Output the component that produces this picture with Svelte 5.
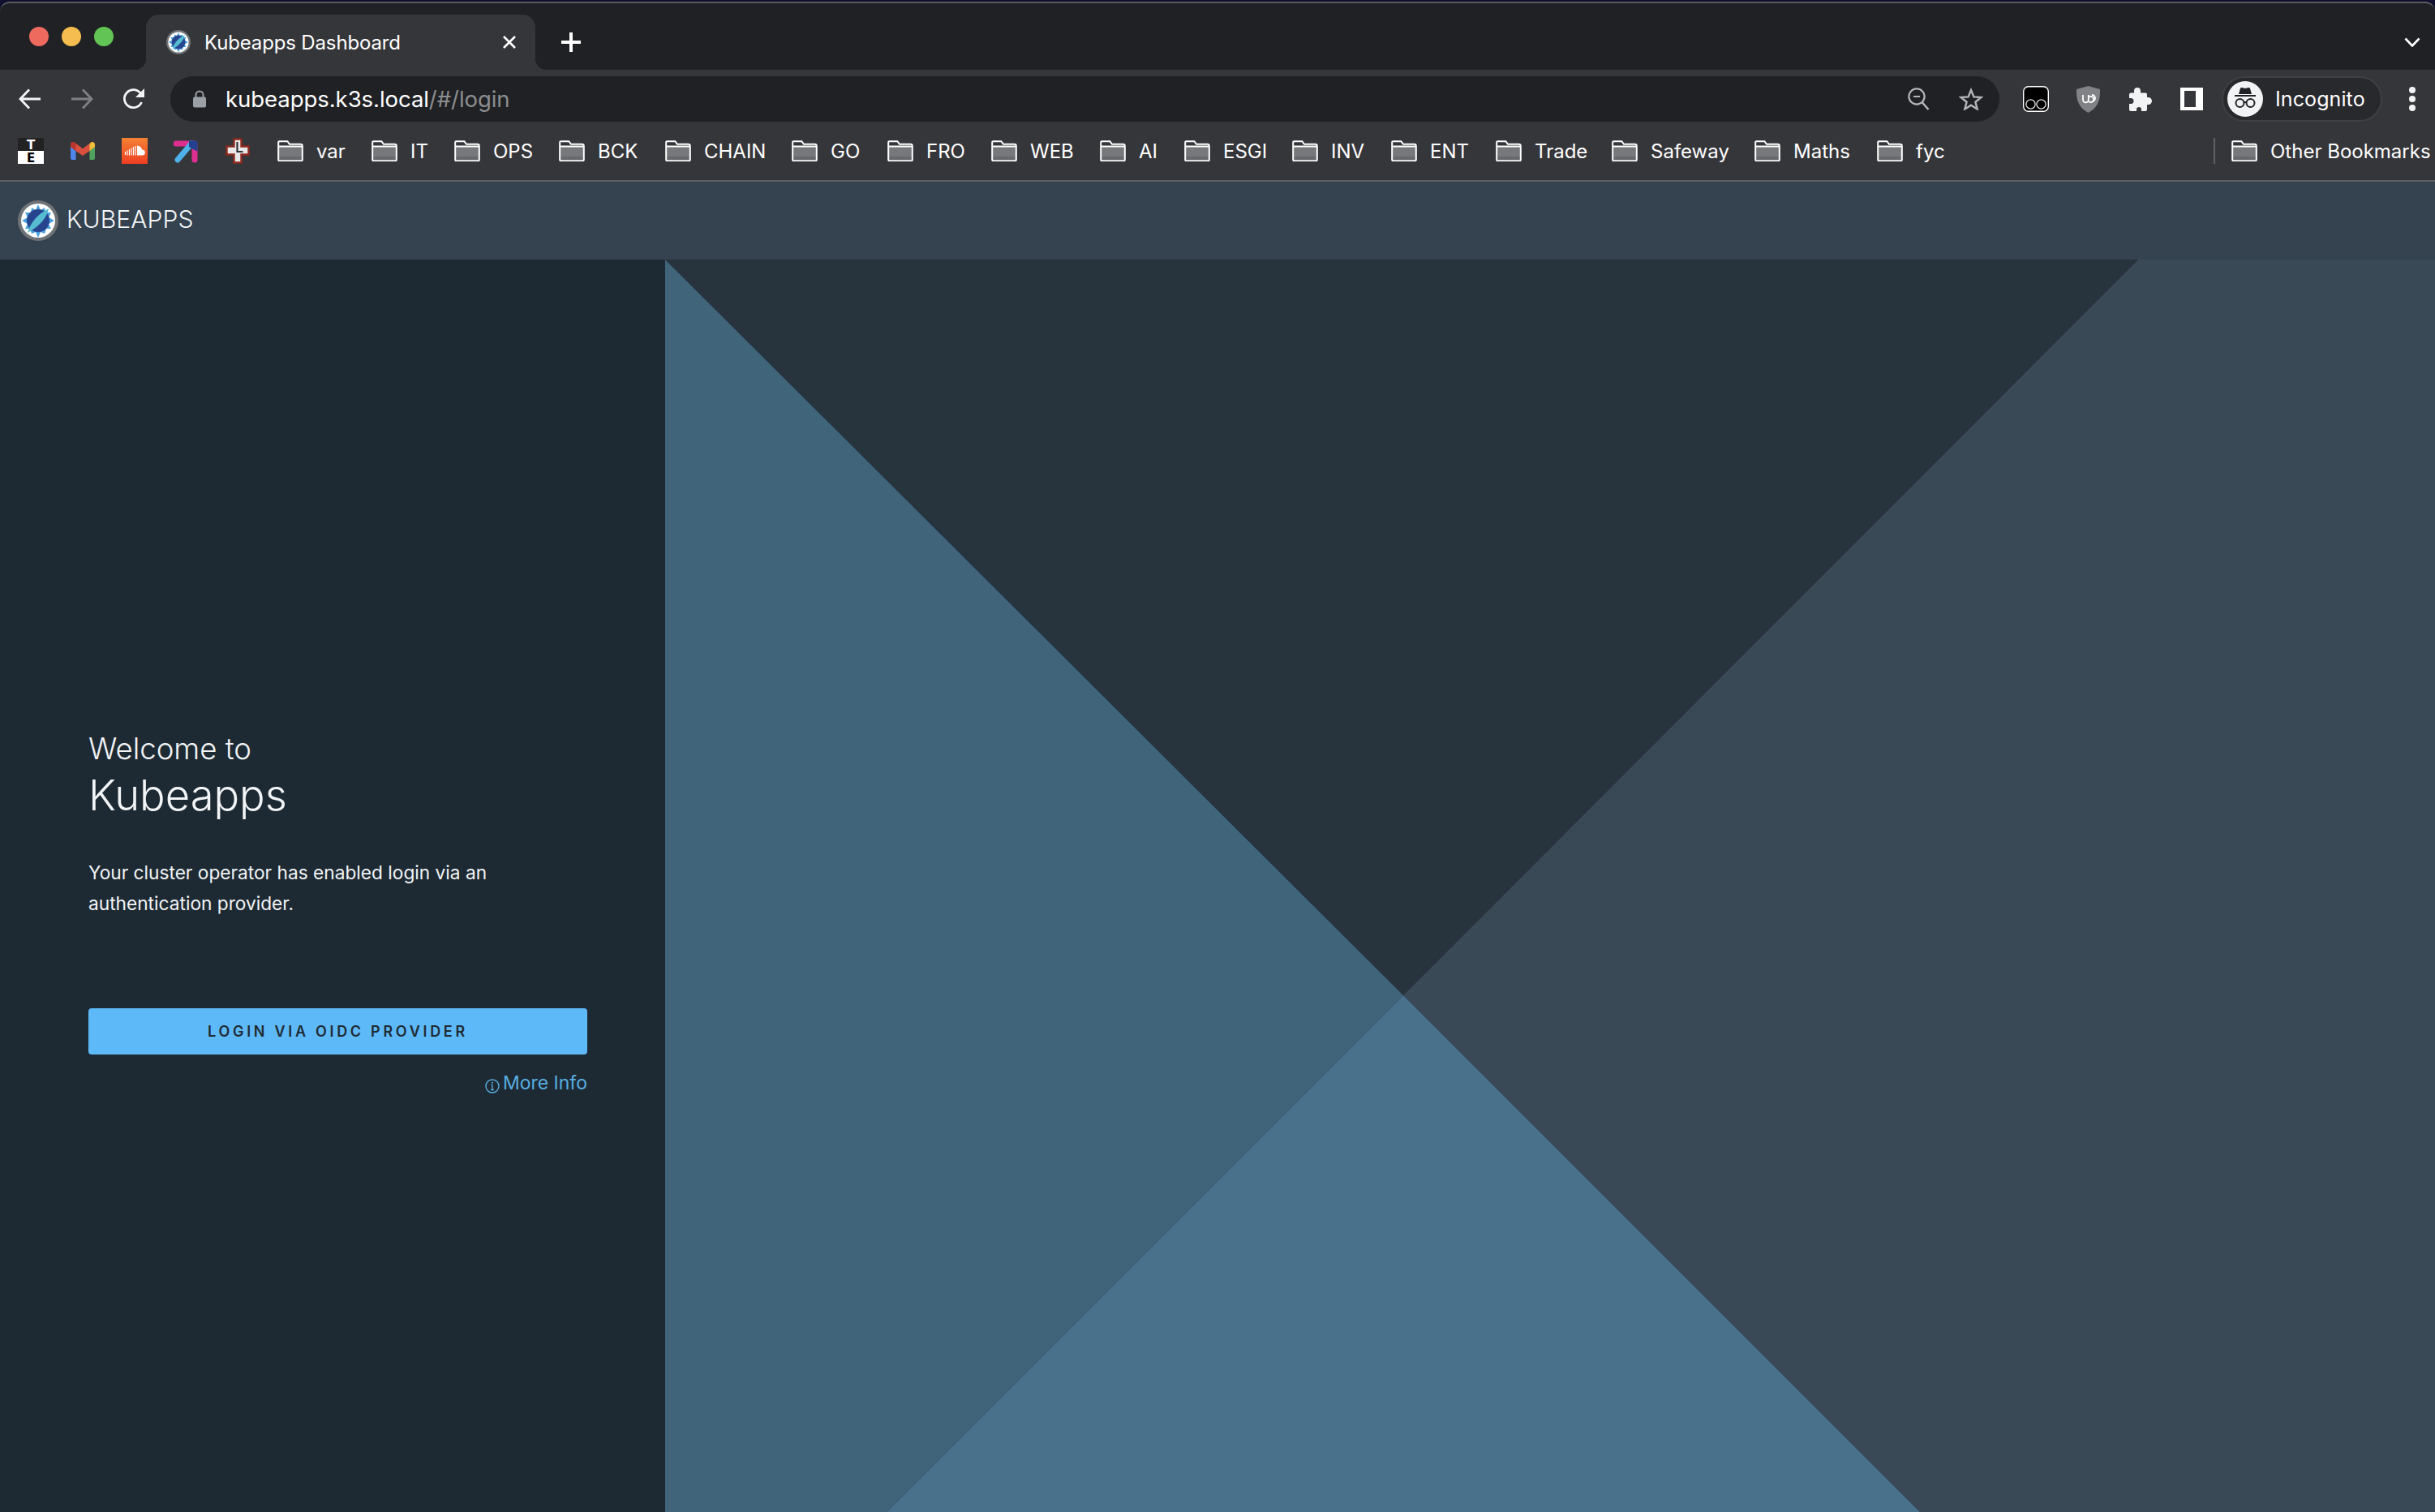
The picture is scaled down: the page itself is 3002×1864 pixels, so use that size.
<script>
  const bookmarks = [
    { name: 'var', w: 116 }, { name: 'IT', w: 102 }, { name: 'OPS', w: 129 }, { name: 'BCK', w: 131 },
    { name: 'CHAIN', w: 156 }, { name: 'GO', w: 118 }, { name: 'FRO', w: 128 }, { name: 'WEB', w: 134 },
    { name: 'AI', w: 104 }, { name: 'ESGI', w: 133 }, { name: 'INV', w: 122 }, { name: 'ENT', w: 129 },
    { name: 'Trade', w: 143 }, { name: 'Safeway', w: 176 }, { name: 'Maths', w: 151 }, { name: 'fyc', w: 100 }
  ];
</script>

{#snippet logo(size)}
  <svg width={size} height={size} viewBox="0 0 50 50" aria-hidden="true">
    <circle cx="25" cy="25" r="25" fill="#6f7377" />
    <circle cx="25" cy="25" r="21" fill="#fff" />
    <path d="M25 5l3 7 5-3 1 6 7 0-3 6 7 4-7 4 3 6-6 0-2 6-5-2-3 7-3-7-5 2-2-6-6 0 3-6-7-4 7-4-3-6 7 0 1-6 5 3z" fill="#4a9fdc" />
    <circle cx="25" cy="25" r="14" fill="#27458f" />
    <path d="M38 10C36 19 31 29 12 40C15 30 21 19 38 10z" fill="#55bcd2" />
  </svg>
{/snippet}

{#snippet folder()}
  <svg class="folder" width="32" height="26" viewBox="0 0 32 26" aria-hidden="true">
    <path d="M2 8h28v16H2z" fill="#77787b" />
    <path d="M2 20h28v4H2z" fill="#68696c" />
    <path d="M1.2 24V2.4q0-1.2 1.2-1.2h10l2.6 3.6h13.6q2.2 0 2.2 2.2v17q0 1.2-1.2 1.2H2.4q-1.2 0-1.2-1.2zM1.2 7.6h29.6" fill="none" stroke="#fff" stroke-width="2" />
  </svg>
{/snippet}

<div class="page">
  <div class="edge"></div>
  <div class="chrome">
    <div class="tabstrip">
      <div class="lights">
        <span class="light red"></span><span class="light yellow"></span><span class="light green"></span>
      </div>
      <div class="tab">
        <span class="favicon">{@render logo(30)}</span>
        <span class="tab-title">Kubeapps Dashboard</span>
        <svg class="tab-close" width="16" height="16" viewBox="0 0 16 16" aria-hidden="true">
          <path d="M1 1l14 14M15 1L1 15" stroke="#fff" stroke-width="2.6" />
        </svg>
      </div>
      <svg class="plus" width="24" height="24" viewBox="0 0 24 24" aria-hidden="true">
        <path d="M12 0v24M0 12h24" stroke="#fff" stroke-width="4" />
      </svg>
      <svg class="chevron" width="20" height="12" viewBox="0 0 20 12" aria-hidden="true">
        <path d="M1.5 1.5L10 10.5l8.5-9" fill="none" stroke="#fff" stroke-width="2.6" />
      </svg>
    </div>

    <div class="toolbar">
      <span class="nav">
        <svg width="28" height="26" viewBox="0 0 28 26" aria-hidden="true"><path d="M27 13H3M13 1.5L2 13l11 11.5" fill="none" stroke="#f1f3f4" stroke-width="2.8" /></svg>
      </span>
      <span class="nav">
        <svg width="28" height="26" viewBox="0 0 28 26" aria-hidden="true"><path d="M1 13h24M15 1.5L26 13 15 24.5" fill="none" stroke="#7e8084" stroke-width="2.8" /></svg>
      </span>
      <span class="nav">
        <svg width="28" height="28" viewBox="0 0 28 28" aria-hidden="true"><path d="M23.5 18a11 11 0 1 1-1-10.5" fill="none" stroke="#f1f3f4" stroke-width="2.8" /><path d="M27 1v11H16z" fill="#f1f3f4" /></svg>
      </span>
      <div class="omnibox">
        <svg class="lock" width="16" height="22" viewBox="0 0 16 22" aria-hidden="true">
          <path d="M3.5 9V6a4.5 4.5 0 0 1 9 0v3" fill="none" stroke="#9aa0a6" stroke-width="2" />
          <rect x="0" y="8.5" width="16" height="13" rx="2" fill="#9aa0a6" />
        </svg>
        <span class="url"><b>kubeapps.k3s.local</b>/#/login</span>
        <svg class="zoom-icon" width="27" height="28" viewBox="0 0 27 28" aria-hidden="true">
          <circle cx="11" cy="11" r="9.6" fill="none" stroke="#b4b6b9" stroke-width="2.2" />
          <path d="M7 11h8" stroke="#b4b6b9" stroke-width="2" />
          <path d="M17.5 18l8 9" stroke="#b4b6b9" stroke-width="2.6" />
        </svg>
        <svg class="star" width="30" height="28" viewBox="0 0 30 28" aria-hidden="true">
          <path d="M15 3l3.4 8.4 9 .6-7 5.8 2.3 8.7-7.700-4.800-7.700 4.800 2.300-8.700-7-5.800 9-.6z" fill="none" stroke="#b4b6b9" stroke-width="2.4" />
        </svg>
      </div>
      <div class="actions">
        <span class="slot">
          <svg width="32" height="32" viewBox="0 0 32 32" aria-hidden="true">
            <rect x=".7" y=".7" width="30.600" height="30.600" rx="6" fill="#000" stroke="#fff" stroke-width="1.400" />
            <circle cx="9.500" cy="22.500" r="5.600" fill="none" stroke="#e8e8e8" stroke-width="1.300" />
            <circle cx="22.500" cy="22.500" r="5.600" fill="none" stroke="#e8e8e8" stroke-width="1.300" />
          </svg>
        </span>
        <span class="slot">
          <svg width="29" height="33" viewBox="0 0 29 33" aria-hidden="true">
            <path d="M14.500 0L29 4c.5 14-3 23-14.500 29C3 27-.5 18 0 4z" fill="#808285" />
            <path d="M8 11v6a3.400 3.400 0 0 0 6.800 0v-6M14.800 14a3.700 3.700 0 1 1 0 5M19 11a4 4 0 0 1 0 8" fill="none" stroke="#fff" stroke-width="1.800" />
          </svg>
        </span>
        <span class="slot">
          <svg width="29" height="29" viewBox="0 0 29 29" aria-hidden="true">
            <path d="M11 0q4 0 4 4v2.500h6a2 2 0 0 1 2 2V12h1.500a4.500 4.500 0 0 1 0 9H23v6a2 2 0 0 1-2 2h-5v-2a3 3 0 0 0-6 0v2H3a2 2 0 0 1-2-2v-7h2a3.500 3.500 0 0 0 0-7H1V8.500a2 2 0 0 1 2-2h4V4q0-4 4-4z" fill="#f1f3f4" />
          </svg>
        </span>
        <span class="slot">
          <span class="sidepanel"></span>
        </span>
        <div class="profile">
          <svg width="44" height="44" viewBox="0 0 44 44" aria-hidden="true">
            <circle cx="22" cy="22" r="22" fill="#f1f3f4" />
            <path d="M14 16l2-7q.5-1.500 2-1l4 1 4-1q1.500-.5 2 1l2 7z" fill="#202124" />
            <path d="M9 18h26" stroke="#202124" stroke-width="2" />
            <circle cx="15.500" cy="27" r="5" fill="none" stroke="#202124" stroke-width="2" />
            <circle cx="28.500" cy="27" r="5" fill="none" stroke="#202124" stroke-width="2" />
            <path d="M20 26h4" stroke="#202124" stroke-width="2" />
          </svg>
          <span class="profile-name">Incognito</span>
        </div>
        <span class="menu"><i></i><i></i><i></i></span>
      </div>
    </div>

    <div class="bookmarks">
      <span class="bm-icon">
        <svg width="32" height="32" viewBox="0 0 32 32" aria-hidden="true">
          <rect width="32" height="16" fill="#222" /><rect y="16" width="32" height="16" fill="#fff" />
          <text x="16" y="13.500" class="te light-letter">T</text>
          <text x="16" y="29.500" class="te">E</text>
        </svg>
      </span>
      <span class="bm-icon gmail">
        <svg width="30" height="22" viewBox="0 0 30 22" aria-hidden="true">
          <path d="M0 6h6.500v16H2a2 2 0 0 1-2-2z" fill="#4f86ec" />
          <path d="M23.500 6H30v14a2 2 0 0 1-2 2h-4.500z" fill="#4fa35f" />
          <path d="M0 3.500C0 .5 3-.8 5.200.8L15 8.200 24.800.8C27-.8 30 .5 30 3.500V6l-6.500 5L15 17 6.500 11 0 6z" fill="#d9503f" />
          <path d="M23.500 3.200L24.800.8C27-.8 30 .5 30 3.500V6l-6.500 5z" fill="#eebd3c" />
          <path d="M0 3.500C0 .5 3-.8 5.200.8L6.500 2v9L0 6z" fill="#b9342c" />
        </svg>
      </span>
      <span class="bm-icon">
        <svg width="32" height="32" viewBox="0 0 32 32" aria-hidden="true">
          <defs><linearGradient id="sc" x1="0" y1="0" x2="0" y2="1"><stop offset="0" stop-color="#f48233" /><stop offset="1" stop-color="#ef3f23" /></linearGradient></defs>
          <rect width="32" height="32" fill="url(#sc)" />
          <path d="M19 9.500a6.500 6.500 0 0 1 6 5 3.500 3.500 0 0 1 .5 7H19z" fill="#fff" />
          <path d="M4.500 17v4M7 15.500v6M9.500 14v7.500M12 12.500v9M14.500 11v10.500M17 10v11.500" stroke="#fff" stroke-width="1.200" />
        </svg>
      </span>
      <span class="bm-icon">
        <svg width="30" height="30" viewBox="0 0 30 30" aria-hidden="true">
          <path d="M3 6h22" stroke="#dd2f8f" stroke-width="7" stroke-linecap="round" />
          <path d="M26 6v20" stroke="#dd2f8f" stroke-width="7" stroke-linecap="round" />
          <path d="M22 6L5 26" stroke="#4fb1ea" stroke-width="7" stroke-linecap="round" />
          <path d="M19 2.500h7.500a3 3 0 0 1 3 3v10L24 13l-5-3z" fill="#23408f" />
        </svg>
      </span>
      <span class="bm-icon">
        <svg width="30" height="32" viewBox="0 0 30 32" aria-hidden="true">
          <path d="M10.500 1.500h9v9h9v10h-9v10h-9v-10h-9v-10h9z" fill="#e9e9e9" stroke="#8e2a1e" stroke-width="2.400" />
          <path d="M14.500 5v12h7" fill="none" stroke="#333" stroke-width="2.200" />
        </svg>
      </span>
      {#each bookmarks as b}
        <span class="bm" style:width="{b.w}px">{@render folder()}<span>{b.name}</span></span>
      {/each}
      <span class="bm-sep"></span>
      <span class="bm other">{@render folder()}<span>Other Bookmarks</span></span>
    </div>
  </div>

  <header class="appbar">
    {@render logo(50)}
    <span class="brand">KUBEAPPS</span>
  </header>

  <main class="login">
    <section class="panel">
      <h1><span class="welcome">Welcome to</span><span class="product">Kubeapps</span></h1>
      <p>Your cluster operator has enabled login via an authentication provider.</p>
      <button type="button">LOGIN VIA OIDC PROVIDER</button>
      <a class="more" href="#more">
        <svg width="18" height="20" viewBox="0 0 18 20" aria-hidden="true">
          <circle cx="9" cy="10" r="8" fill="none" stroke="#57aee0" stroke-width="1.400" />
          <path d="M9 8.500v6M7 14.500h4M7.500 8.500H9" fill="none" stroke="#57aee0" stroke-width="1.300" />
          <circle cx="9" cy="5.800" r="1" fill="#57aee0" />
        </svg>
        <span>More Info</span>
      </a>
    </section>
    <svg class="art" viewBox="0 0 2182 1544" preserveAspectRatio="none" aria-hidden="true">
      <polygon points="0,0 1816,0 910,907" fill="#27343e" />
      <polygon points="1816,0 2182,0 2182,1544 1547,1544 910,907" fill="#3a4956" />
      <polygon points="0,0 910,907 273,1544 0,1544" fill="#40657b" />
      <polygon points="910,907 1547,1544 273,1544" fill="#4a718b" />
    </svg>
  </main>
</div>

<style>
  :global(body) { margin: 0; background: #10102e; }
  .page {
    width: 3002px;
    height: 1864px;
    overflow: hidden;
    display: flex;
    flex-direction: column;
    font-family: Inter, "Liberation Sans", sans-serif;
    color: #fff;
    background: #10102e;
  }
  .edge { height: 2px; flex: none; }
  .chrome {
    flex: none;
    background: #202124;
    border-top: 2px solid #5b5c60;
    border-radius: 12px 12px 0 0;
    overflow: hidden;
  }
  .tabstrip { height: 82px; display: flex; align-items: flex-end; position: relative; }
  .lights { display: flex; gap: 16px; padding-left: 36px; align-self: flex-start; margin-top: 29px; }
  .light { width: 24px; height: 24px; border-radius: 50%; }
  .red { background: #ee6a5f; }
  .yellow { background: #f5bd4f; }
  .green { background: #61c454; }
  .tab {
    margin-left: 40px;
    width: 480px;
    height: 68px;
    box-sizing: border-box;
    background: #35363a;
    border-radius: 16px 16px 0 0;
    display: flex;
    align-items: center;
    padding: 0 24px 0 25px;
    position: relative;
  }
  .tab::before, .tab::after {
    content: "";
    position: absolute;
    bottom: 0;
    width: 14px;
    height: 14px;
  }
  .tab::before { left: -14px; background: radial-gradient(circle at 0 0, transparent 14px, #35363a 14.500px); }
  .tab::after { right: -14px; background: radial-gradient(circle at 100% 0, transparent 14px, #35363a 14.500px); }
  .favicon { display: flex; }
  .tab-title { margin-left: 17px; font-size: 24px; letter-spacing: -0.15px; white-space: nowrap; flex: 1; }
  .plus { margin: 0 0 22px 32px; }
  .chevron { margin: 0 18px 28px auto; }

  .toolbar { height: 64px; box-sizing: border-box; padding: 8px 0 0 5px; background: #35363a; display: flex; align-items: center; }
  .nav { width: 64px; display: flex; justify-content: center; flex: none; }
  .omnibox {
    margin-left: 13px;
    flex: 1;
    height: 56px;
    border-radius: 28px;
    background: #202124;
    display: flex;
    align-items: center;
    padding: 0 20px 0 28px;
  }
  .lock { flex: none; }
  .url { margin-left: 24px; font-size: 27.6px; color: #8b8d90; flex: 1; white-space: nowrap; letter-spacing: -0.1px; }
  .url b { font-weight: 400; color: #fff; }
  .zoom-icon { margin-right: 36px; }
  .actions { width: 524px; margin-left: 13px; display: flex; align-items: center; flex: none; }
  .slot { width: 64px; display: flex; justify-content: center; flex: none; }
  .sidepanel { width: 28px; height: 28px; box-sizing: border-box; border: solid #fff; border-width: 4px 9px 4px 5px; }
  .profile {
    margin-left: 5px;
    width: 198px;
    height: 56px;
    box-sizing: border-box;
    border: 2px solid #3f4044;
    border-radius: 28px;
    background: #28292d;
    display: flex;
    align-items: center;
    padding-left: 5px;
    flex: none;
  }
  .profile-name { margin-left: 15px; font-size: 25px; letter-spacing: 0.1px; }
  .menu { margin-left: 33px; display: flex; flex-direction: column; gap: 3px; }
  .menu i { width: 8px; height: 8px; border-radius: 50%; background: #f1f3f4; }

  .bookmarks {
    height: 72px;
    background: #35363a;
    border-bottom: 2px solid #5f6063;
    display: flex;
    align-items: center;
    padding-left: 22px;
    font-size: 24px;
    white-space: nowrap;
  }
  .bm-icon { width: 64px; display: flex; flex: none; }
  .gmail { padding-left: 1px; width: 63px; }
  .bm { display: flex; align-items: center; gap: 16px; flex: none; }
  .bm-sep { width: 2px; height: 32px; background: #5f6063; margin-left: 315px; margin-right: 20px; flex: none; }
  .folder { flex: none; }
  .te { font-family: "DejaVu Sans", sans-serif; font-weight: 700; font-size: 15px; text-anchor: middle; fill: #000; }
  .light-letter { fill: #fff; }

  .appbar {
    height: 96px;
    flex: none;
    background: #35424f;
    display: flex;
    align-items: center;
    padding-left: 22px;
    gap: 10px;
  }
  .brand { font-size: 30px; font-weight: 300; color: #f4f6f8; letter-spacing: 0.1px; position: relative; top: -2px; }

  .login { flex: 1; min-height: 0; display: flex; }
  .panel {
    width: 820px;
    flex: none;
    box-sizing: border-box;
    background: #1e2a33;
    padding: 581px 96px 0 109px;
    display: flex;
    flex-direction: column;
  }
  h1 { margin: 0; font-weight: 300; display: flex; flex-direction: column; color: #f2f4f6; }
  .welcome { font-size: 36.6px; line-height: 44px; }
  .product { font-size: 52.5px; line-height: 70px; }
  p { margin: 42px 0 0; font-size: 22.7px; line-height: 38px; color: #f2f4f6; font-weight: 400; width: 600px; }
  button {
    margin-top: 110px;
    height: 57px;
    border: none;
    border-radius: 4px;
    background: #5eb9f9;
    color: #1f2a33;
    font: 600 18px Inter, "Liberation Sans", sans-serif;
    letter-spacing: 3.700px;
    padding: 0;
  }
  .more {
    align-self: flex-end;
    margin-top: 21px;
    display: flex;
    align-items: flex-end;
    gap: 4px;
    color: #57aee0;
    font-size: 23px;
    line-height: 28px;
    text-decoration: none;
  }
  .art { flex: 1; min-width: 0; height: 100%; display: block; }
</style>
